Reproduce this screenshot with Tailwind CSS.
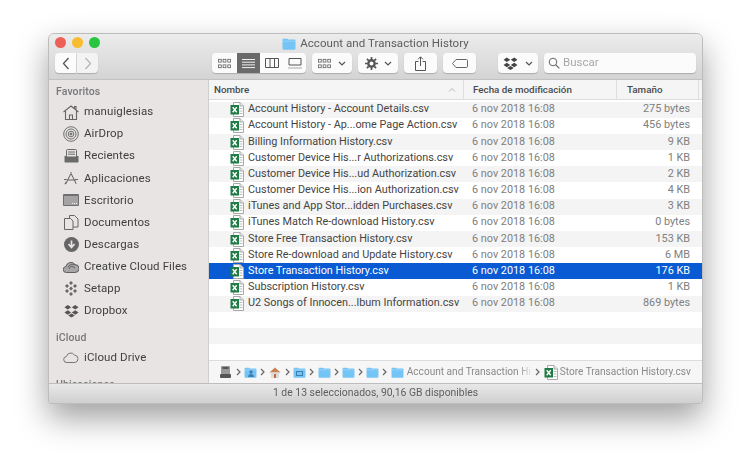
<!DOCTYPE html>
<html lang="es"><head><meta charset="utf-8"><title>Finder</title>
<script src="https://cdn.jsdelivr.net/npm/@tailwindcss/browser@4"></script></head>
<body class="w-[750px] h-[466px] overflow-hidden bg-white font-['Roboto','Liberation_Sans',sans-serif] text-[11px] leading-none">
<svg class="hidden" width="0" height="0">
<symbol id="xls" viewBox="0 0 14 15"><path d="M3.500.5h6.500l3.500 3.500v10.500h-10z" fill="#fff" stroke="#a9a9a9"/><path d="M10 .5v3.500h3.500" fill="#e8e8e8" stroke="#a9a9a9"/><rect x="9.500" y="6" width="3" height="1" fill="#bbb"/><rect x="9.500" y="8.500" width="3" height="1" fill="#bbb"/><rect x="9.500" y="11" width="3" height="1" fill="#bbb"/><rect x=".5" y="3" width="8.500" height="9.500" fill="#1f7a45"/><path d="M2.700 5.300l4 5M6.700 5.300l-4 5" stroke="#fff" stroke-width="1.400" fill="none"/></symbol>
<symbol id="folder" viewBox="0 0 14 12"><path d="M.5 2c0-.8.5-1.300 1.200-1.300h3.200c.6 0 .8.7 1.400.9h6c.7 0 1.200.5 1.200 1.200v7.700c0 .7-.5 1.200-1.200 1.200H1.700C1 11.700.5 11.200.5 10.500z" fill="#74c4f6"/><path d="M.5 3.200h13" stroke="#a6dbfb" stroke-width=".7"/></symbol>
<symbol id="chev" viewBox="0 0 5 8"><path d="M1 1l3 3-3 3" fill="none" stroke="#666" stroke-width="1.200"/></symbol>
<symbol id="dbx" viewBox="0 0 16 14"><path d="M4 .5L.5 3 4 5.500 7.700 3zM12 .5L8.300 3 12 5.500 15.500 3zM4 6.200L.5 8.700 4 11l3.700-2.300zM12 6.200L8.300 8.700 12 11l3.500-2.300zM8 9.600l-3.500 2.200L8 14l3.500-2.200z" fill="currentColor"/></symbol>
<symbol id="grid" viewBox="0 0 14 11"><g fill="none" stroke="currentColor" stroke-width=".9"><rect x=".5" y="1" width="3" height="3"/><rect x="5.500" y="1" width="3" height="3"/><rect x="10.500" y="1" width="3" height="3"/><rect x=".5" y="7" width="3" height="3"/><rect x="5.500" y="7" width="3" height="3"/><rect x="10.500" y="7" width="3" height="3"/></g></symbol>
<symbol id="down" viewBox="0 0 8 5"><path d="M1 1l3 3 3-3" fill="none" stroke="#555" stroke-width="1.200"/></symbol>
</svg>

<div class="pt-[33px] pl-[48px]">
<div class="w-[655px] h-[371px] flex flex-col overflow-hidden rounded-t-[6px] rounded-b-[3px] border border-[#bdbdbd] shadow-[0_14px_32px_rgba(0,0,0,0.38)] bg-[#e8e4e3] blur-[0.3px]">

  <header class="h-[46px] shrink-0 flex flex-col bg-linear-to-b from-[#ececec] to-[#d4d4d4] border-b border-[#c2c2c2]">
    <div class="h-[19px] shrink-0 relative flex items-center justify-center gap-[4px] text-[#5c5c5c] text-[11.5px] tracking-[0.05px]">
      <div class="absolute left-[6px] top-[3px] flex gap-[6.500px]">
        <span class="size-[10.500px] rounded-full bg-[#ee5f58]"></span>
        <span class="size-[10.500px] rounded-full bg-[#f8bc2f]"></span>
        <span class="size-[10.500px] rounded-full bg-[#29c440]"></span>
      </div>
      <svg class="w-[14px] h-[12px]"><use href="#folder"/></svg>
      <span>Account and Transaction History</span>
    </div>
    <div class="h-[20px] flex items-center pl-[6px] text-[#555]">
      <div class="flex gap-[1px]">
        <span class="w-[21px] h-[20px] rounded-l-[4px] bg-[#fbfbfb] shadow-[0_1px_1px_rgba(0,0,0,0.2)] flex items-center justify-center"><svg width="8" height="13" viewBox="0 0 8 13"><path d="M6.500 1L1.500 6.500l5 5.500" fill="none" stroke="#555" stroke-width="1.300"/></svg></span>
        <span class="w-[21px] h-[20px] rounded-r-[4px] bg-[#f3f3f3] shadow-[0_1px_1px_rgba(0,0,0,0.2)] flex items-center justify-center"><svg width="8" height="13" viewBox="0 0 8 13"><path d="M1.500 1l5 5.500-5 5.500" fill="none" stroke="#b5b5b5" stroke-width="1.300"/></svg></span>
      </div>
      <div class="ml-[114px] w-[94px] h-[20px] flex rounded-[4px] bg-[#fbfbfb] shadow-[0_1px_1px_rgba(0,0,0,0.2)] overflow-hidden">
        <span class="w-[25px] flex items-center justify-center text-[#666]"><svg class="w-[13px] h-[11px]"><use href="#grid"/></svg></span>
        <span class="w-[23px] flex items-center justify-center bg-[#6a6a6a]"><svg width="13" height="11" viewBox="0 0 13 11"><path d="M0 1.500h13M0 4.200h13M0 6.900h13M0 9.600h13" stroke="#f2f2f2" stroke-width="1"/></svg></span>
        <span class="w-[23px] flex items-center justify-center"><svg width="14" height="10" viewBox="0 0 14 10"><path d="M.5.500h13v9H.5zM5 .5v9M9.500.5v9" fill="none" stroke="#555"/></svg></span>
        <span class="w-[23px] flex items-center justify-center"><svg width="14" height="11" viewBox="0 0 14 11"><path d="M1 .5h12v6.500H1z" fill="none" stroke="#555"/><path d="M.5 10h13" stroke="#555" stroke-dasharray="1 1"/></svg></span>
      </div>
      <div class="ml-[6px] w-[40px] h-[20px] flex items-center justify-center gap-[7px] rounded-[4px] bg-[#fbfbfb] shadow-[0_1px_1px_rgba(0,0,0,0.2)] text-[#666]"><svg class="w-[13px] h-[11px]"><use href="#grid"/></svg><svg class="w-[8px] h-[5px]"><use href="#down"/></svg></div>
      <div class="ml-[6px] w-[40px] h-[20px] flex items-center justify-center gap-[6px] rounded-[4px] bg-[#fbfbfb] shadow-[0_1px_1px_rgba(0,0,0,0.2)]"><svg width="13" height="13" viewBox="0 0 13 13"><circle cx="6.500" cy="6.500" r="3.200" fill="none" stroke="#555" stroke-width="2.400"/><path d="M6.500 0v2.500M6.500 10.500V13M0 6.500h2.500M10.500 6.500H13M1.900 1.900l1.800 1.800M9.300 9.300l1.800 1.800M1.900 11.100l1.800-1.800M9.300 3.700l1.800-1.800" stroke="#555" stroke-width="1.700"/></svg><svg class="w-[8px] h-[5px]"><use href="#down"/></svg></div>
      <div class="ml-[6px] w-[33px] h-[20px] flex items-center justify-center rounded-[4px] bg-[#fbfbfb] shadow-[0_1px_1px_rgba(0,0,0,0.2)]"><svg width="11" height="15" viewBox="0 0 11 15"><path d="M3.500 5.500H.5v9h10v-9h-3" fill="none" stroke="#555"/><path d="M5.500 10V1M3 3.300L5.500.8 8 3.300" fill="none" stroke="#555"/></svg></div>
      <div class="ml-[6px] w-[33px] h-[20px] flex items-center justify-center rounded-[4px] bg-[#fbfbfb] shadow-[0_1px_1px_rgba(0,0,0,0.2)]"><svg width="16" height="9" viewBox="0 0 16 9"><path d="M4 .5h10.500c.5 0 1 .5 1 1v6c0 .5-.5 1-1 1H4L.5 4.500z" fill="none" stroke="#666"/></svg></div>
      <div class="ml-[22px] w-[40px] h-[20px] flex items-center justify-center gap-[7px] rounded-[4px] bg-[#fbfbfb] shadow-[0_1px_1px_rgba(0,0,0,0.2)] text-[#444]"><svg class="w-[15px] h-[13px]"><use href="#dbx"/></svg><svg class="w-[8px] h-[5px]"><use href="#down"/></svg></div>
      <div class="ml-[6px] w-[152px] h-[20px] flex items-center gap-[3px] pl-[4px] rounded-[4px] bg-[#fbfbfb] shadow-[0_1px_1px_rgba(0,0,0,0.2)] text-[#a8a8a8] text-[11.500px]"><svg width="12" height="12" viewBox="0 0 12 12"><circle cx="5" cy="5" r="3.800" fill="none" stroke="#666"/><path d="M7.800 7.800L11.300 11.300" stroke="#666" stroke-width="1.200"/></svg><span>Buscar</span></div>
    </div>
  </header>

  <div class="flex-1 min-h-0 flex">
    <aside class="w-[159px] shrink-0 overflow-hidden bg-[#e8e4e3] text-[#3f3f3f] text-[11.500px] tracking-[0.1px] pl-[7px] pt-[6px]">
      <h2 class="h-[13px] flex items-center text-[10.500px] font-medium text-[#77777a]">Favoritos</h2>
      <ul class="mt-[2px] flex flex-col pl-[7px]">
        <li class="h-[22.100px] flex items-center gap-[5px]"><span class="w-[16px] flex justify-center"><svg width="16" height="15" viewBox="0 0 16 15"><path d="M.5 7L8 1l7.500 6M11.500 3.500V1.500h1.500v3.200M2.500 6v8.500h11V6M6.500 14.500V10h3v4.500" fill="none" stroke="#666" stroke-width="1.100"/></svg></span>manuiglesias</li>
        <li class="h-[22.100px] flex items-center gap-[5px]"><span class="w-[16px] flex justify-center"><svg width="16" height="16" viewBox="0 0 16 16" fill="none" stroke="#6f6f6f"><circle cx="8" cy="8" r="7.300"/><circle cx="8" cy="8" r="5"/><circle cx="8" cy="8" r="2.800"/><circle cx="8" cy="8" r="1" fill="#6f6f6f"/></svg></span>AirDrop</li>
        <li class="h-[22.100px] flex items-center gap-[5px]"><span class="w-[16px] flex justify-center"><svg width="15" height="14" viewBox="0 0 15 14"><path d="M.5 7h14v5.500c0 .6-.5 1-1 1h-12c-.5 0-1-.4-1-1z" fill="#6a6a6a"/><rect x="2.500" y=".5" width="10" height="7.500" rx="1" fill="#e8e4e3" stroke="#6a6a6a"/><path d="M4 3h7M4 5.200h7" stroke="#6a6a6a"/></svg></span>Recientes</li>
        <li class="h-[22.100px] flex items-center gap-[5px]"><span class="w-[16px] flex justify-center"><svg width="17" height="15" viewBox="0 0 17 15" fill="none" stroke="#666"><path d="M9 1L3 13M8 1l6 12M5 9h8.500M1 8.500h3M13 8.500h3M2 13.500l1.500-2.500" stroke-width="1.100"/></svg></span>Aplicaciones</li>
        <li class="h-[22.100px] flex items-center gap-[5px]"><span class="w-[16px] flex justify-center"><svg width="16" height="12" viewBox="0 0 16 12"><rect width="16" height="12" rx="1" fill="#6f6f6f"/><rect x="1" y="2" width="14" height="9" fill="#a5a3a3"/><path d="M9 9.500h5" stroke="#eee" stroke-dasharray="1 1"/></svg></span>Escritorio</li>
        <li class="h-[22.100px] flex items-center gap-[5px]"><span class="w-[16px] flex justify-center"><svg width="15" height="15" viewBox="0 0 15 15" fill="#e8e4e3" stroke="#666"><path d="M5.500.5h5l3.500 3.500v8h-8.500z"/><path d="M.5 3.500h6l2.500 2.500v8.500H.5z"/></svg></span>Documentos</li>
        <li class="h-[22.100px] flex items-center gap-[5px]"><span class="w-[16px] flex justify-center"><svg width="15" height="15" viewBox="0 0 15 15"><circle cx="7.500" cy="7.500" r="7.500" fill="#666"/><path d="M7.500 3.500v6M4.500 7l3 3.500 3-3.500" fill="none" stroke="#e8e4e3" stroke-width="1.700"/></svg></span>Descargas</li>
        <li class="h-[22.100px] flex items-center gap-[5px]"><span class="w-[16px] flex justify-center"><svg width="16" height="12" viewBox="0 0 16 12" fill="none" stroke="#5f5f5f"><path d="M3.500 11.500a3 3 0 0 1-.5-6A5 5 0 0 1 12 3.500a4 4 0 0 1 0 8z" fill="#a8a6a6" stroke-width="1"/><path d="M6 8c1-3 3-3.500 6-1M5 6c2-3 5-3 7-2" stroke-width="1"/></svg></span>Creative Cloud Files</li>
        <li class="h-[22.100px] flex items-center gap-[5px]"><span class="w-[16px] flex justify-center"><svg width="12" height="15" viewBox="0 0 12 15" fill="#686868"><path d="M6 0l2 2-2 2-2-2zM2 3l2 2-2 2-2-2zM10 3l2 2-2 2-2-2zM6 5.500l2 2-2 2-2-2zM2 8l2 2-2 2-2-2zM10 8l2 2-2 2-2-2zM6 11l2 2-2 2-2-2z"/></svg></span>Setapp</li>
        <li class="h-[22.100px] flex items-center gap-[5px]"><span class="w-[16px] flex justify-center text-[#555]"><svg class="w-[15px] h-[14px]"><use href="#dbx"/></svg></span>Dropbox</li>
      </ul>
      <h2 class="mt-[10px] h-[13px] flex items-center text-[10.500px] font-medium text-[#77777a]">iCloud</h2>
      <div class="mt-[2px] ml-[7px] h-[22px] flex items-center gap-[5px]"><span class="w-[16px] flex justify-center"><svg width="16" height="11" viewBox="0 0 16 11"><path d="M4 10.500a3 3 0 0 1-.6-6A4.500 4.500 0 0 1 11.500 3 3.800 3.800 0 0 1 12 10.500z" fill="none" stroke="#777"/></svg></span>iCloud Drive</div>
      <h2 class="mt-[10px] h-[13px] flex items-center text-[10.500px] font-medium text-[#77777a]">Ubicaciones</h2>
    </aside>

    <main class="flex-1 min-w-0 flex flex-col border-l border-[#cfcfcf] bg-white">
      <div class="h-[20px] shrink-0 flex items-center bg-[#f5f5f5] border-b border-[#dcdcdc] text-[9.800px] font-medium text-[#4a4a4a]">
        <span class="w-[255px] pl-[5px] relative h-full flex items-center border-r border-[#dedede]">Nombre<svg class="absolute right-[7px] top-[8px]" width="8" height="4" viewBox="0 0 8 4"><path d="M1 3.500l3-3 3 3" fill="none" stroke="#b5b5b5"/></svg></span>
        <span class="w-[153px] pl-[9px] h-full flex items-center border-r border-[#dedede]">Fecha de modificación</span>
        <span class="w-[82px] pl-[10px] h-full flex items-center border-r border-[#dedede]">Tamaño</span>
      </div>
      <div class="flex-1 min-h-0 overflow-hidden pt-[1.600px] text-[10.850px] whitespace-nowrap">
        <div class="h-[16.180px] flex items-center bg-[#f4f4f4]"><svg class="ml-[21px] w-[14px] h-[15px] shrink-0"><use href="#xls"/></svg><span class="ml-[4px] w-[224px] text-[#444]">Account History - Account Details.csv</span><span class="w-[142px] text-[#808080]">6 nov 2018 16:08</span><span class="w-[76px] text-right text-[#808080]">275 bytes</span></div>
        <div class="h-[16.180px] flex items-center"><svg class="ml-[21px] w-[14px] h-[15px] shrink-0"><use href="#xls"/></svg><span class="ml-[4px] w-[224px] text-[#444]">Account History - Ap...ome Page Action.csv</span><span class="w-[142px] text-[#808080]">6 nov 2018 16:08</span><span class="w-[76px] text-right text-[#808080]">456 bytes</span></div>
        <div class="h-[16.180px] flex items-center bg-[#f4f4f4]"><svg class="ml-[21px] w-[14px] h-[15px] shrink-0"><use href="#xls"/></svg><span class="ml-[4px] w-[224px] text-[#444]">Billing Information History.csv</span><span class="w-[142px] text-[#808080]">6 nov 2018 16:08</span><span class="w-[76px] text-right text-[#808080]">9 KB</span></div>
        <div class="h-[16.180px] flex items-center"><svg class="ml-[21px] w-[14px] h-[15px] shrink-0"><use href="#xls"/></svg><span class="ml-[4px] w-[224px] text-[#444]">Customer Device His...r Authorizations.csv</span><span class="w-[142px] text-[#808080]">6 nov 2018 16:08</span><span class="w-[76px] text-right text-[#808080]">1 KB</span></div>
        <div class="h-[16.180px] flex items-center bg-[#f4f4f4]"><svg class="ml-[21px] w-[14px] h-[15px] shrink-0"><use href="#xls"/></svg><span class="ml-[4px] w-[224px] text-[#444]">Customer Device His...ud Authorization.csv</span><span class="w-[142px] text-[#808080]">6 nov 2018 16:08</span><span class="w-[76px] text-right text-[#808080]">2 KB</span></div>
        <div class="h-[16.180px] flex items-center"><svg class="ml-[21px] w-[14px] h-[15px] shrink-0"><use href="#xls"/></svg><span class="ml-[4px] w-[224px] text-[#444]">Customer Device His...ion Authorization.csv</span><span class="w-[142px] text-[#808080]">6 nov 2018 16:08</span><span class="w-[76px] text-right text-[#808080]">4 KB</span></div>
        <div class="h-[16.180px] flex items-center bg-[#f4f4f4]"><svg class="ml-[21px] w-[14px] h-[15px] shrink-0"><use href="#xls"/></svg><span class="ml-[4px] w-[224px] text-[#444]">iTunes and App Stor...idden Purchases.csv</span><span class="w-[142px] text-[#808080]">6 nov 2018 16:08</span><span class="w-[76px] text-right text-[#808080]">3 KB</span></div>
        <div class="h-[16.180px] flex items-center"><svg class="ml-[21px] w-[14px] h-[15px] shrink-0"><use href="#xls"/></svg><span class="ml-[4px] w-[224px] text-[#444]">iTunes Match Re-download History.csv</span><span class="w-[142px] text-[#808080]">6 nov 2018 16:08</span><span class="w-[76px] text-right text-[#808080]">0 bytes</span></div>
        <div class="h-[16.180px] flex items-center bg-[#f4f4f4]"><svg class="ml-[21px] w-[14px] h-[15px] shrink-0"><use href="#xls"/></svg><span class="ml-[4px] w-[224px] text-[#444]">Store Free Transaction History.csv</span><span class="w-[142px] text-[#808080]">6 nov 2018 16:08</span><span class="w-[76px] text-right text-[#808080]">153 KB</span></div>
        <div class="h-[16.180px] flex items-center"><svg class="ml-[21px] w-[14px] h-[15px] shrink-0"><use href="#xls"/></svg><span class="ml-[4px] w-[224px] text-[#444]">Store Re-download and Update History.csv</span><span class="w-[142px] text-[#808080]">6 nov 2018 16:08</span><span class="w-[76px] text-right text-[#808080]">6 MB</span></div>
        <div class="h-[16.180px] flex items-center bg-[#0a5bd3] text-white"><svg class="ml-[21px] w-[14px] h-[15px] shrink-0"><use href="#xls"/></svg><span class="ml-[4px] w-[224px]">Store Transaction History.csv</span><span class="w-[142px]">6 nov 2018 16:08</span><span class="w-[76px] text-right">176 KB</span></div>
        <div class="h-[16.180px] flex items-center"><svg class="ml-[21px] w-[14px] h-[15px] shrink-0"><use href="#xls"/></svg><span class="ml-[4px] w-[224px] text-[#444]">Subscription History.csv</span><span class="w-[142px] text-[#808080]">6 nov 2018 16:08</span><span class="w-[76px] text-right text-[#808080]">1 KB</span></div>
        <div class="h-[16.180px] flex items-center bg-[#f4f4f4]"><svg class="ml-[21px] w-[14px] h-[15px] shrink-0"><use href="#xls"/></svg><span class="ml-[4px] w-[224px] text-[#444]">U2 Songs of Innocen...lbum Information.csv</span><span class="w-[142px] text-[#808080]">6 nov 2018 16:08</span><span class="w-[76px] text-right text-[#808080]">869 bytes</span></div>
        <div class="h-[16.180px]"></div>
        <div class="h-[16.180px] bg-[#f4f4f4]"></div>
      </div>
      <div class="h-[23px] shrink-0 flex items-center pl-[11px] border-t border-[#dcdcdc] bg-[#f6f6f6] text-[#8a8a8a] text-[10.100px]">
        <span class="w-[16px] flex shrink-0"><svg width="11" height="12" viewBox="0 0 11 12"><rect x="1" width="9" height="9" rx="1" fill="#999"/><rect x="2.500" y="1" width="6" height="2" fill="#555"/><rect y="8" width="11" height="4" rx="1" fill="#555"/></svg></span>
        <svg class="w-[5px] h-[8px] mr-[3.400px] shrink-0"><use href="#chev"/></svg>
        <span class="w-[16px] flex relative shrink-0"><svg class="w-[13px] h-[11px]"><use href="#folder"/></svg><svg class="absolute left-[4px] top-[3px]" width="6" height="7" viewBox="0 0 6 7" fill="#3d7fb0"><circle cx="3" cy="2" r="1.700"/><path d="M0 7c0-4 6-4 6 0z"/></svg></span>
        <svg class="w-[5px] h-[8px] mr-[3.400px] shrink-0"><use href="#chev"/></svg>
        <span class="w-[16px] flex shrink-0"><svg width="12" height="11" viewBox="0 0 12 11"><path d="M6 .5L.5 5.500h11z" fill="#c9824d"/><path d="M2 5.500h8V11H2z" fill="#dcdcdc"/><path d="M5 7h2v4H5z" fill="#c96b3a"/></svg></span>
        <svg class="w-[5px] h-[8px] mr-[3.400px] shrink-0"><use href="#chev"/></svg>
        <span class="w-[16px] flex relative shrink-0"><svg class="w-[13px] h-[11px]"><use href="#folder"/></svg><span class="absolute left-[3px] top-[4px] w-[7px] h-[5px] border border-[#3d7fb0]"></span></span>
        <svg class="w-[5px] h-[8px] mr-[3.400px] shrink-0"><use href="#chev"/></svg>
        <span class="w-[16px] flex shrink-0"><svg class="w-[13px] h-[11px]"><use href="#folder"/></svg></span>
        <svg class="w-[5px] h-[8px] mr-[3.400px] shrink-0"><use href="#chev"/></svg>
        <span class="w-[16px] flex shrink-0"><svg class="w-[13px] h-[11px]"><use href="#folder"/></svg></span>
        <svg class="w-[5px] h-[8px] mr-[3.400px] shrink-0"><use href="#chev"/></svg>
        <span class="w-[16px] flex shrink-0"><svg class="w-[13px] h-[11px]"><use href="#folder"/></svg></span>
        <svg class="w-[5px] h-[8px] mr-[3.400px] shrink-0"><use href="#chev"/></svg>
        <span class="w-[16px] flex shrink-0"><svg class="w-[13px] h-[11px]"><use href="#folder"/></svg></span>
        <span class="w-[125px] shrink-0 overflow-hidden whitespace-nowrap mask-r-from-90% mask-r-to-100%">Account and Transaction History</span>
        <svg class="w-[5px] h-[8px] ml-[3px] mr-[4px] shrink-0"><use href="#chev"/></svg>
        <svg class="w-[14px] h-[15px] shrink-0"><use href="#xls"/></svg>
        <span class="ml-[2px] whitespace-nowrap">Store Transaction History.csv</span>
      </div>
    </main>
  </div>

  <footer class="h-[20px] shrink-0 flex items-center justify-center bg-linear-to-b from-[#e8e8e8] to-[#d0d0d0] border-t border-[#bdbdbd] text-[#5e5e5e] text-[10.400px]">1 de 13 seleccionados, 90,16 GB disponibles</footer>
</div>
</div>
</body></html>
